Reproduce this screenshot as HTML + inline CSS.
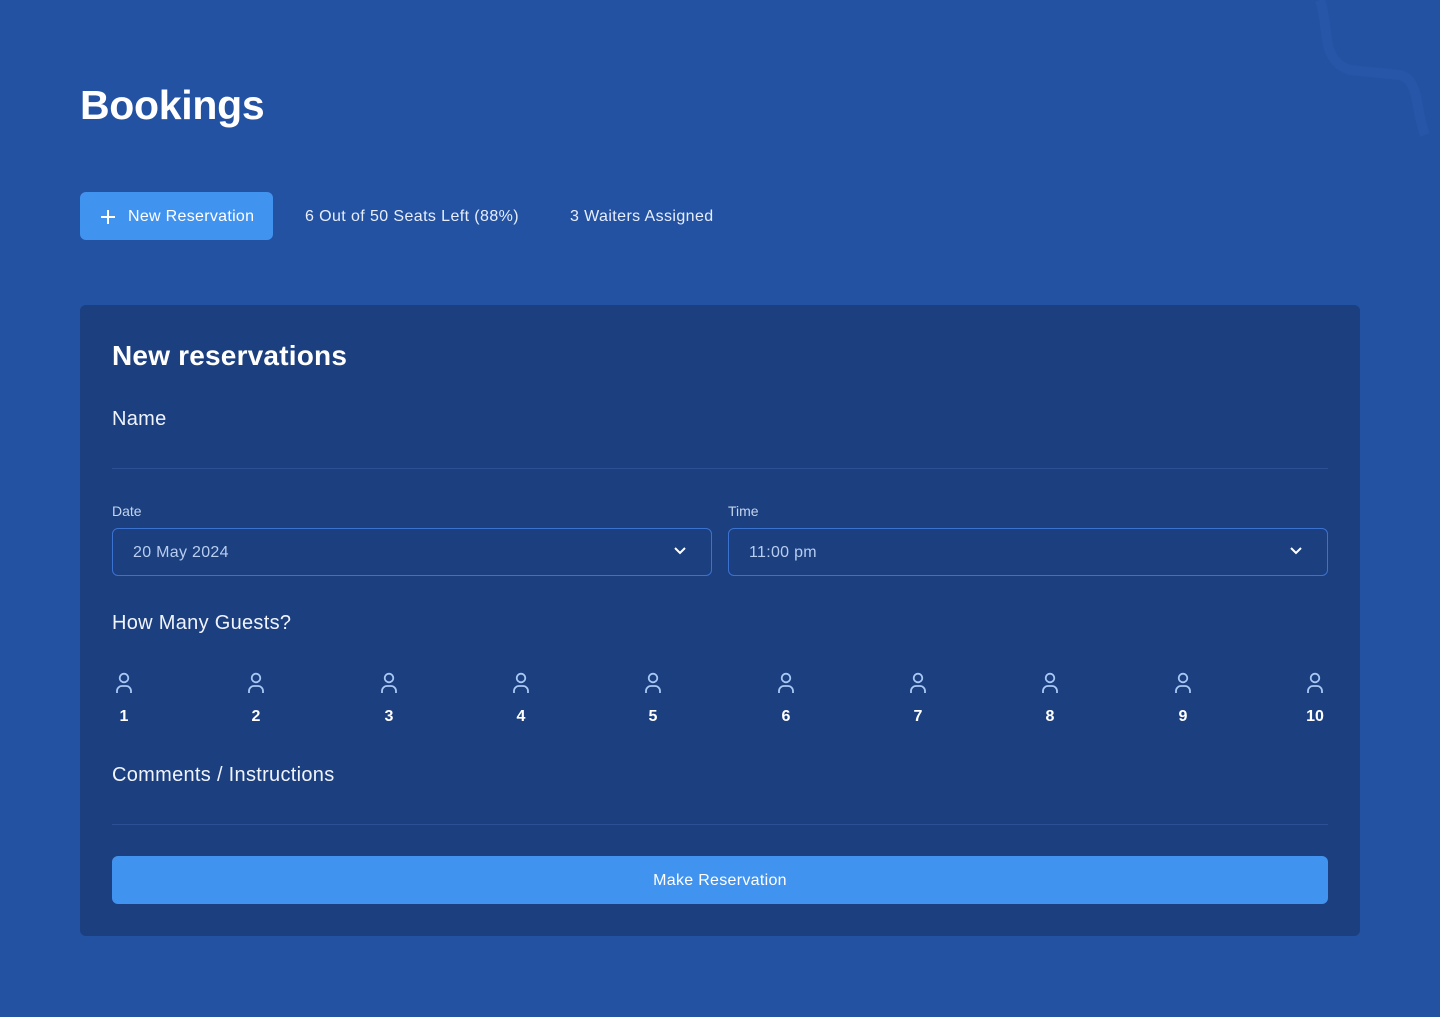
<!DOCTYPE html>
<html><head><meta charset="utf-8"><style>
*{margin:0;padding:0;box-sizing:border-box}
body{width:1440px;height:1017px;background:#2352a2;font-family:"Liberation Sans",sans-serif;color:#fff;position:relative;overflow:hidden}
.a{position:absolute}
h1{position:absolute;left:80px;top:82px;font-size:41px;font-weight:700;letter-spacing:-0.3px}
.btn{left:80px;top:192px;width:193px;height:48px;background:#4193f0;border-radius:6px;font-size:16px;display:flex;align-items:center;padding-left:20px;letter-spacing:0.3px;padding-top:2px}
.stat{top:208px;font-size:16px;color:#e6eefc;letter-spacing:0.4px}
.card{left:80px;top:305px;width:1280px;height:631px;background:#1b3f7f;border-radius:6px}
.lbl{font-size:20px;color:#f0f4fc;letter-spacing:0.3px}
.line{height:1px;background:#2b5096}
.sm{font-size:14px;color:#c5d4ee}
.sel{width:600px;height:48px;border:1px solid #3c72cf;border-radius:6px;font-size:16px;color:#b8cdf0;padding:15px 0 0 20px;letter-spacing:0.3px}
.chev{position:absolute;right:24px;top:17px}
.g{position:absolute;top:672px;width:40px;text-align:center;font-size:16px;font-weight:700}
.g svg{display:block;margin:0 auto 14px}
.mk{left:112px;top:856px;width:1216px;height:48px;background:#4193f0;border-radius:6px;font-size:16px;text-align:center;line-height:50px;letter-spacing:0.3px}
</style></head><body>
<svg class="a" style="left:1300px;top:0" width="140" height="140"><path d="M20 0 C30 30 20 60 50 70 L100 75 C120 80 115 110 125 135" stroke="#2756a8" stroke-width="10" fill="none"/></svg>
<h1>Bookings</h1>
<div class="a btn"><svg width="16" height="16" style="margin-right:12px"><path d="M8 1v14M1 8h14" stroke="#fff" stroke-width="2"/></svg>New Reservation</div>
<div class="a stat" style="left:305px">6 Out of 50 Seats Left (88%)</div>
<div class="a stat" style="left:570px">3 Waiters Assigned</div>
<div class="a card"></div>
<div class="a" style="left:112px;top:340px;font-size:28px;font-weight:700;letter-spacing:0.2px">New reservations</div>
<div class="a lbl" style="left:112px;top:408px">Name</div>
<div class="a line" style="left:112px;top:468px;width:1216px"></div>
<div class="a sm" style="left:112px;top:503px">Date</div>
<div class="a sm" style="left:728px;top:503px">Time</div>
<div class="a sel" style="left:112px;top:528px">20 May 2024<svg class="chev" width="14" height="10"><path d="M2 2l5 5 5-5" stroke="#fff" stroke-width="2" fill="none"/></svg></div>
<div class="a sel" style="left:728px;top:528px">11:00 pm<svg class="chev" width="14" height="10"><path d="M2 2l5 5 5-5" stroke="#fff" stroke-width="2" fill="none"/></svg></div>
<div class="a lbl" style="left:112px;top:612px">How Many Guests?</div>
<div class="g" style="left:104px"><svg width="18" height="22"><circle cx="9" cy="6" r="4.3" stroke="#a9c8f5" stroke-width="1.8" fill="none"/><path d="M2 21v-2a5 5 0 0 1 5-5h4a5 5 0 0 1 5 5v2" stroke="#a9c8f5" stroke-width="1.8" fill="none"/></svg>1</div>
<div class="g" style="left:236px"><svg width="18" height="22"><circle cx="9" cy="6" r="4.3" stroke="#a9c8f5" stroke-width="1.8" fill="none"/><path d="M2 21v-2a5 5 0 0 1 5-5h4a5 5 0 0 1 5 5v2" stroke="#a9c8f5" stroke-width="1.8" fill="none"/></svg>2</div>
<div class="g" style="left:369px"><svg width="18" height="22"><circle cx="9" cy="6" r="4.3" stroke="#a9c8f5" stroke-width="1.8" fill="none"/><path d="M2 21v-2a5 5 0 0 1 5-5h4a5 5 0 0 1 5 5v2" stroke="#a9c8f5" stroke-width="1.8" fill="none"/></svg>3</div>
<div class="g" style="left:501px"><svg width="18" height="22"><circle cx="9" cy="6" r="4.3" stroke="#a9c8f5" stroke-width="1.8" fill="none"/><path d="M2 21v-2a5 5 0 0 1 5-5h4a5 5 0 0 1 5 5v2" stroke="#a9c8f5" stroke-width="1.8" fill="none"/></svg>4</div>
<div class="g" style="left:633px"><svg width="18" height="22"><circle cx="9" cy="6" r="4.3" stroke="#a9c8f5" stroke-width="1.8" fill="none"/><path d="M2 21v-2a5 5 0 0 1 5-5h4a5 5 0 0 1 5 5v2" stroke="#a9c8f5" stroke-width="1.8" fill="none"/></svg>5</div>
<div class="g" style="left:766px"><svg width="18" height="22"><circle cx="9" cy="6" r="4.3" stroke="#a9c8f5" stroke-width="1.8" fill="none"/><path d="M2 21v-2a5 5 0 0 1 5-5h4a5 5 0 0 1 5 5v2" stroke="#a9c8f5" stroke-width="1.8" fill="none"/></svg>6</div>
<div class="g" style="left:898px"><svg width="18" height="22"><circle cx="9" cy="6" r="4.3" stroke="#a9c8f5" stroke-width="1.8" fill="none"/><path d="M2 21v-2a5 5 0 0 1 5-5h4a5 5 0 0 1 5 5v2" stroke="#a9c8f5" stroke-width="1.8" fill="none"/></svg>7</div>
<div class="g" style="left:1030px"><svg width="18" height="22"><circle cx="9" cy="6" r="4.3" stroke="#a9c8f5" stroke-width="1.8" fill="none"/><path d="M2 21v-2a5 5 0 0 1 5-5h4a5 5 0 0 1 5 5v2" stroke="#a9c8f5" stroke-width="1.8" fill="none"/></svg>8</div>
<div class="g" style="left:1163px"><svg width="18" height="22"><circle cx="9" cy="6" r="4.3" stroke="#a9c8f5" stroke-width="1.8" fill="none"/><path d="M2 21v-2a5 5 0 0 1 5-5h4a5 5 0 0 1 5 5v2" stroke="#a9c8f5" stroke-width="1.8" fill="none"/></svg>9</div>
<div class="g" style="left:1295px"><svg width="18" height="22"><circle cx="9" cy="6" r="4.3" stroke="#a9c8f5" stroke-width="1.8" fill="none"/><path d="M2 21v-2a5 5 0 0 1 5-5h4a5 5 0 0 1 5 5v2" stroke="#a9c8f5" stroke-width="1.8" fill="none"/></svg>10</div>
<div class="a lbl" style="left:112px;top:764px">Comments / Instructions</div>
<div class="a line" style="left:112px;top:824px;width:1216px"></div>
<div class="a mk">Make Reservation</div>
</body></html>
